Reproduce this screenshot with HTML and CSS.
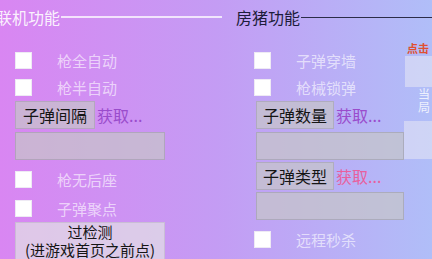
FILE: index.html
```
<!DOCTYPE html>
<html lang="zh-CN">
<head>
  <meta charset="UTF-8">
  <title>功能面板</title>
  <link rel="stylesheet" href="styles.css">
</head>
<body>
  <div class="panel">
    <section class="group online">
      <div class="group-title"><span>联机功能</span></div>
      <div class="group-body">
        <label class="check"><input type="checkbox">枪全自动</label>
        <label class="check"><input type="checkbox">枪半自动</label>
        <div class="fetch">
          <button class="btn">子弹间隔</button>
          <span class="get">获取...</span>
        </div>
        <input class="field" type="text">
        <label class="check gap-top"><input type="checkbox">枪无后座</label>
        <label class="check gap-small"><input type="checkbox">子弹聚点</label>
        <div class="btn wide" role="button">过检测<br>(进游戏首页之前点)</div>
      </div>
    </section>

    <section class="group room">
      <div class="group-title dark"><span>房猪功能</span></div>
      <div class="group-body cols">
        <div class="col">
          <label class="check"><input type="checkbox">子弹穿墙</label>
          <label class="check"><input type="checkbox">枪械锁弹</label>
          <div class="fetch">
            <button class="btn">子弹数量</button>
            <span class="get">获取...</span>
          </div>
          <input class="field" type="text">
          <div class="fetch next">
            <button class="btn">子弹类型</button>
            <span class="get pink">获取...</span>
          </div>
          <input class="field" type="text">
          <label class="check gap-top"><input type="checkbox">远程秒杀</label>
        </div>
        <div class="col side">
          <div class="hint">点击</div>
          <div class="side-box"></div>
          <div class="side-text">当<br>局</div>
          <div class="side-box tall"></div>
        </div>
      </div>
    </section>
  </div>
</body>
</html>
```

FILE: styles.css
```
html, body {
  margin: 0;
  width: 432px;
  height: 259px;
  overflow: hidden;
}

body {
  background: linear-gradient(90deg, #d986f2 0%, #c49cf4 50%, #b0bef8 100%);
  font-family: "Noto Sans CJK SC", "Noto Sans", sans-serif;
}

.panel {
  display: flex;
  height: 259px;
}

.group.online {
  width: 222px;
  flex-shrink: 0;
}

.group.room {
  flex: 1;
  margin-left: 14px;
}

.group-title {
  display: flex;
  align-items: center;
  height: 34px;
  font-size: 16px;
  color: rgba(255,255,255,0.9);
}

.group-title::after {
  content: "";
  flex: 1;
  height: 2px;
  margin-left: 1px;
  background: rgba(255,255,255,0.75);
}

.online .group-title span {
  margin-left: -4px;
}

.group-title.dark {
  color: #1c1c3a;
}

.group-title.dark::after {
  height: 1px;
  background: #2c2c48;
}

.group-body {
  padding: 13px 0 0 15px;
  display: flex;
  flex-direction: column;
  align-items: flex-start;
}

.group-body.cols {
  flex-direction: row;
  padding-left: 18px;
}

.col {
  display: flex;
  flex-direction: column;
  align-items: flex-start;
  width: 150px;
}

.check {
  display: flex;
  align-items: center;
  height: 27px;
  font-size: 15px;
  color: rgba(255,255,255,0.62);
}

.check input {
  appearance: none;
  width: 17px;
  height: 17px;
  margin: 0 25px 0 0;
  background: #fff;
  border: 1px solid #eeeaf4;
  box-sizing: border-box;
}

.check.gap-top {
  margin-top: 6px;
}

.check.gap-small {
  margin-top: 2px;
}

.fetch {
  display: flex;
  align-items: center;
  height: 28px;
}

.room .fetch, .room .field {
  margin-left: 2px;
}

.fetch.next {
  margin-top: 2px;
}

.btn {
  height: 28px;
  width: 80px;
  padding: 0;
  font-family: inherit;
  font-size: 16px;
  color: #151515;
  background: rgba(198,198,200,0.7);
  border: 1px solid rgba(140,140,150,0.35);
  border-radius: 0;
}

.room .btn {
  width: 78px;
}

.get {
  margin-left: 2px;
  font-size: 16px;
  color: #9a4ccc;
}

.get.pink {
  color: #e8609e;
}

.field {
  display: block;
  width: 150px;
  height: 28px;
  margin: 3px 0 0 0;
  box-sizing: border-box;
  background: rgba(198,198,200,0.7);
  border: 1px solid rgba(140,140,150,0.4);
}

.room .field {
  width: 148px;
  margin-top: 3px;
}

.room .fetch.next + .field {
  margin-top: 2px;
}

.btn.wide {
  box-sizing: border-box;
  width: 150px;
  height: 40px;
  margin-top: 0;
  font-size: 15px;
  line-height: 18px;
  text-align: center;
  background: rgba(226,226,228,0.7);
  border: 1px solid rgba(160,160,170,0.3);
  cursor: default;
}

.side {
  width: 60px;
  margin-top: -5px;
}

.hint {
  margin-left: 3px;
  font-size: 11px;
  line-height: 12px;
  font-weight: bold;
  color: #e05030;
  white-space: nowrap;
}

.side-box {
  width: 60px;
  height: 31px;
  margin: 2px 0 0 1px;
  background: rgba(232,232,244,0.55);
}

.side-text {
  height: 34px;
  padding-left: 14px;
  font-size: 12px;
  line-height: 13px;
  color: rgba(255,255,255,0.8);
}

.side-box.tall {
  height: 38px;
  margin: 0;
}
```
